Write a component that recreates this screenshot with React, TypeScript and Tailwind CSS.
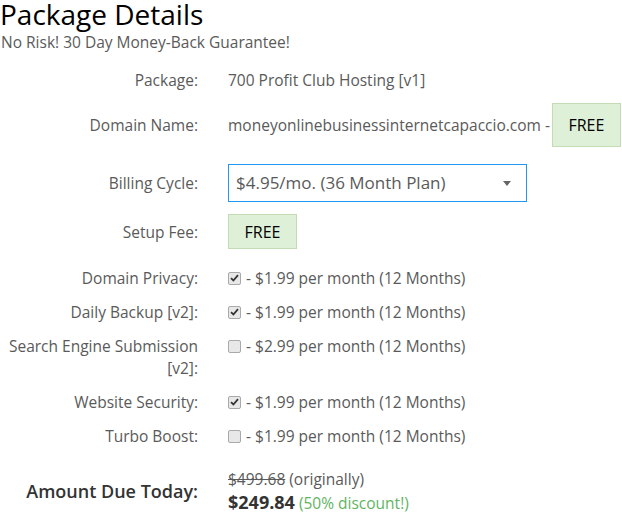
import React, { FC } from "react";

const font = { fontFamily: '"Open Sans", "Liberation Sans", sans-serif' };

const Check: FC<{ on?: boolean }> = ({ on }) => (
  <span className="inline-flex w-[13px] h-[13px] items-center justify-center rounded-[2px] border border-[#a9a9a9] bg-[#e8e8e8] mr-[5px] shrink-0">
    {on && (
      <svg width="9" height="8" viewBox="0 0 9 8">
        <path d="M1 4.2 L3.4 6.5 L8 1.2" fill="none" stroke="#333" strokeWidth="1.8" />
      </svg>
    )}
  </span>
);

const Row: FC<{ label: React.ReactNode; className?: string; children: React.ReactNode; align?: string }> = ({
  label,
  className,
  children,
  align,
}) => (
  <div className={`flex ${align ?? "items-center"} ${className ?? ""}`}>
    <div className="w-[198px] shrink-0 text-right leading-[22px]">{label}</div>
    <div className="ml-[30px] flex items-center leading-[22px]">{children}</div>
  </div>
);

const Addon: FC<{ on?: boolean; price: string }> = ({ on, price }) => (
  <span className="flex items-center">
    <Check on={on} />- {price} per month (12 Months)
  </span>
);

const Badge: FC<{ className?: string }> = ({ className }) => (
  <span
    className={`inline-flex w-[69px] items-center justify-center border border-[#c4dcb4] bg-[#dff0d8] text-black text-[16px] ${className ?? ""}`}
  >
    FREE
  </span>
);

const App: FC = () => {
  return (
    <div className="w-[622px] h-[516px] overflow-hidden bg-white text-[#5a5a5a] text-[15.5px]" style={font}>
      <h1 className="text-[28px] leading-[24px] text-black pt-[2px]">Package Details</h1>
      <p className="mt-[6px] pl-[1px] leading-[20px]">No Risk! 30 Day Money-Back Guarantee!</p>

      <Row label="Package:" className="mt-[17px]">
        700 Profit Club Hosting [v1]
      </Row>
      <Row label="Domain Name:" className="mt-[12px]">
        <span className="whitespace-nowrap">moneyonlinebusinessinternetcapaccio.com -</span>
        <Badge className="ml-[2px] h-[44px]" />
      </Row>
      <Row label="Billing Cycle:" className="mt-[17px]">
        <div className="flex h-[38px] w-[299px] items-center justify-between border border-[#2196f3] pl-[7px] pr-[15px] text-[17px]">
          <span>$4.95/mo. (36 Month Plan)</span>
          <svg width="8" height="5" viewBox="0 0 8 5">
            <path d="M0 0 H8 L4 5 Z" fill="#666" />
          </svg>
        </div>
      </Row>
      <Row label="Setup Fee:" className="mt-[12px]">
        <Badge className="h-[35px]" />
      </Row>
      <Row label="Domain Privacy:" className="mt-[18px]">
        <Addon on price="$1.99" />
      </Row>
      <Row label="Daily Backup [v2]:" className="mt-[12px]">
        <Addon on price="$1.99" />
      </Row>
      <Row label="Search Engine Submission [v2]:" className="mt-[12px]" align="items-start">
        <Addon price="$2.99" />
      </Row>
      <Row label="Website Security:" className="mt-[12px]">
        <Addon on price="$1.99" />
      </Row>
      <Row label="Turbo Boost:" className="mt-[12px]">
        <Addon price="$1.99" />
      </Row>
      <div className="flex items-center mt-[21px]">
        <div className="w-[198px] shrink-0 text-right text-[18px] font-semibold text-[#333]">Amount Due Today:</div>
        <div className="ml-[30px] flex flex-col">
          <span className="leading-[23px]">
            <span className="line-through">$499.68</span> (originally)
          </span>
          <span className="leading-[23px]">
            <span className="text-[18px] font-bold text-[#333]">$249.84</span>{" "}
            <span className="text-[#62b462]">(50% discount!)</span>
          </span>
        </div>
      </div>
    </div>
  );
};

export default App;
